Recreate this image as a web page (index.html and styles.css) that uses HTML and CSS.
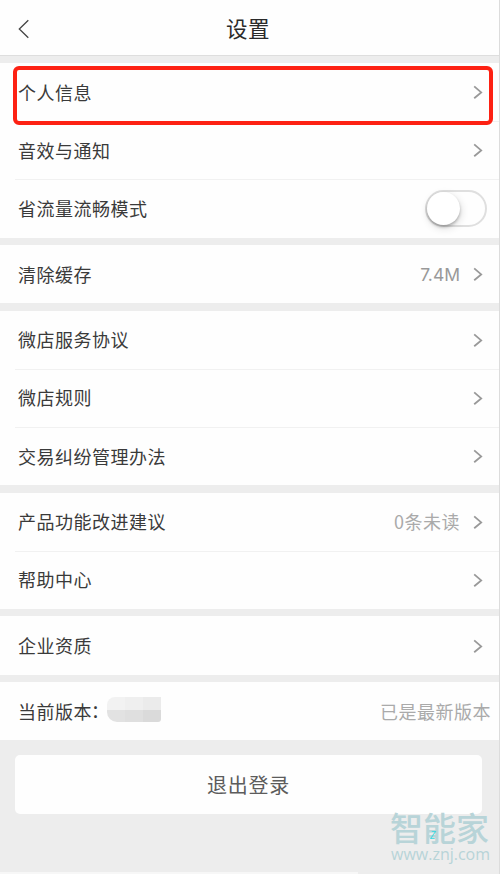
FILE: index.html
```html
<!DOCTYPE html>
<html lang="zh-CN">
<head>
<meta charset="utf-8">
<title>设置</title>
<link rel="stylesheet" href="styles.css">
</head>
<body>
<svg class="defs"><symbol id="chev" viewBox="0 0 10 14"><path d="M1.2 1.4 8.2 7.4 1.2 13.3" fill="none" stroke="#999" stroke-width="1.8"/></symbol></svg>
<div class="screen">
  <header class="header">
    <svg class="back" viewBox="0 0 12 20"><path d="M10.3 1.2 1.3 10l9 8.8" fill="none" stroke="#444" stroke-width="1.3"/></svg>
    <h1>设置</h1>
  </header>
  <main>
    <section class="group">
      <div class="row"><span>个人信息</span><svg class="chev"><use href="#chev"/></svg><div class="highlight"></div></div>
      <div class="row"><span>音效与通知</span><svg class="chev"><use href="#chev"/></svg></div>
      <div class="row"><span>省流量流畅模式</span><div class="toggle"><i></i></div></div>
    </section>
    <section class="group">
      <div class="row"><span>清除缓存</span><span class="value latin">7.4M</span><svg class="chev"><use href="#chev"/></svg></div>
    </section>
    <section class="group">
      <div class="row"><span>微店服务协议</span><svg class="chev"><use href="#chev"/></svg></div>
      <div class="row"><span>微店规则</span><svg class="chev"><use href="#chev"/></svg></div>
      <div class="row"><span>交易纠纷管理办法</span><svg class="chev"><use href="#chev"/></svg></div>
    </section>
    <section class="group">
      <div class="row"><span>产品功能改进建议</span><span class="value unread">0条未读</span><svg class="chev"><use href="#chev"/></svg></div>
      <div class="row"><span>帮助中心</span><svg class="chev"><use href="#chev"/></svg></div>
    </section>
    <section class="group">
      <div class="row"><span>企业资质</span><svg class="chev"><use href="#chev"/></svg></div>
    </section>
    <section class="group">
      <div class="row"><span class="version">当前版本<span class="colon">：</span></span><div class="mosaic"><i></i><i></i><i></i><i></i><i></i><i></i></div><span class="value latest">已是最新版本</span></div>
    </section>
  </main>
  <button class="logout">退出登录</button>
  <div class="watermark"><div class="brand">智能家</div><div class="url">www.znj.com</div><span class="mark">Z</span></div>
  <div class="bottom"></div>
</div>
</body>
</html>
```

FILE: styles.css
```css
* { box-sizing: border-box; }
body {
  margin: 0;
  background: #ededed;
  color: #3a3a3a;
  font: 18px/26px "Noto Sans CJK SC", sans-serif;
}
.defs { position: absolute; width: 0; height: 0; }
.screen {
  position: relative;
  height: 874px;
  overflow: hidden;
  border-right: 1px solid #dcdcdc;
}
.header {
  display: grid;
  grid-template-columns: 60px 1fr 64px;
  align-items: center;
  height: 56px;
  padding-top: 2px;
  background: #fefefe;
  border-bottom: 1px solid #dedede;
}
.back { width: 12px; height: 20px; margin-left: 18px; }
h1 {
  margin: -1px 0 0 1px;
  font-size: 21.5px;
  font-weight: 400;
  letter-spacing: .5px;
  text-align: center;
  color: #2a2a2a;
}
main {
  display: flex;
  flex-direction: column;
  gap: 7.45px;
  padding-top: 7px;
}
.group { background: #fefefe; }
.row {
  position: relative;
  display: flex;
  align-items: center;
  height: 58.2px;
  padding: 0 16px 1px 18px;
  letter-spacing: .5px;
}
.row + .row { background: linear-gradient(#f1f1f1, #f1f1f1) 15px 0 / 100% 1px no-repeat; }
.chev { width: 10px; height: 14px; margin: 1px 0 0 auto; }
.value { margin-left: auto; color: #999; }
.value + .chev { margin-left: 13px; }
.latin { padding-top: 2px; font-family: Inter, sans-serif; font-size: 17.5px; font-weight: 400; letter-spacing: 0; }
.unread { color: #aaa; }
.latest { margin-right: -8px; color: #aaa; }
.highlight {
  position: absolute;
  left: 13px;
  top: 3px;
  z-index: 1;
  width: 480px;
  height: 59px;
  border: 4px solid #fd2113;
  border-radius: 6px;
}
.toggle {
  width: 62px;
  height: 37px;
  margin: 1px -4px 0 auto;
  border: 2px solid #dfdfdf;
  border-radius: 19px;
}
.toggle i {
  display: block;
  width: 33px;
  height: 33px;
  border-radius: 50%;
  background: #fff;
  box-shadow: 0 2px 3px rgba(0,0,0,.25), 1px 3px 9px rgba(0,0,0,.14);
}
.version { width: 89px; white-space: nowrap; }
.colon { position: relative; top: -1px; left: -1px; }
.mosaic {
  display: grid;
  grid-template-columns: 18px 18px 18px;
  grid-template-rows: 13px 12px;
  margin-top: -2px;
  overflow: hidden;
  border-radius: 8px 0 3px 10px;
}
.mosaic i:nth-child(1) { background: #f2f2f2; }
.mosaic i:nth-child(2) { background: #efefef; }
.mosaic i:nth-child(3) { background: #ebebeb; }
.mosaic i:nth-child(4) { background: #e2e2e2; }
.mosaic i:nth-child(5) { background: #dfdfdf; }
.mosaic i:nth-child(6) { background: #dadada; }
.logout {
  display: block;
  width: 467px;
  height: 59px;
  margin: 14.5px 0 0 15px;
  padding: 1px 0 0;
  border: 0;
  border-radius: 5px;
  background: #fefefe;
  color: #5c5c5c;
  font: 20px "Noto Sans CJK SC", sans-serif;
  letter-spacing: .7px;
}
.watermark {
  position: absolute;
  left: 390px;
  top: 810px;
  color: #b8d4d8;
  white-space: nowrap;
}
.brand { font-size: 33px; font-weight: 500; line-height: 34px; }
.url { margin-left: 1px; font: 16px/20px "Open Sans", sans-serif; letter-spacing: 0; }
.mark {
  position: absolute;
  left: 40px;
  top: 17px;
  color: #35d8df;
  font: italic 10px/16px "Open Sans", sans-serif;
}
.bottom { position: absolute; left: 0; bottom: 0; width: 358px; height: 2px; background: #f7f7f7; }
```
